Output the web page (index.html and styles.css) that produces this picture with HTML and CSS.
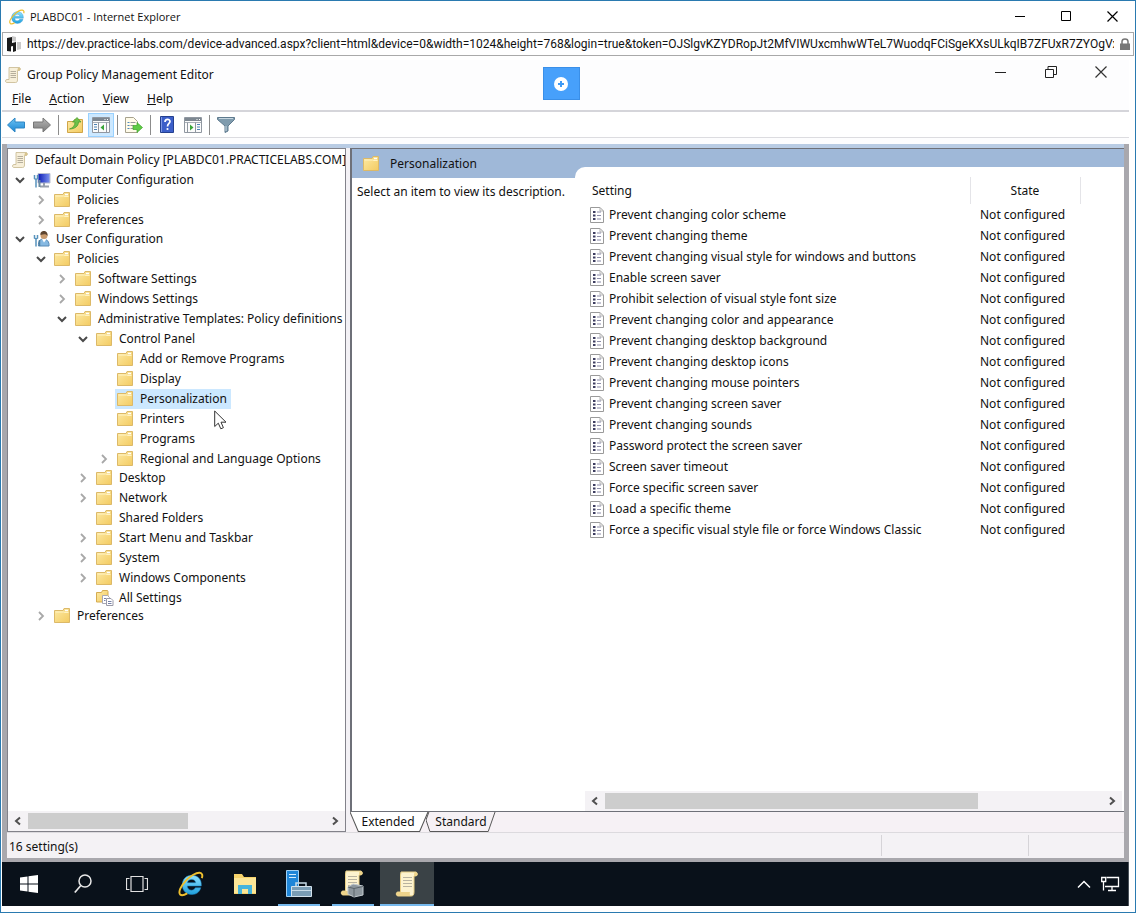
FILE: index.html
```
<!DOCTYPE html>
<html lang="en">
<head>
  <meta charset="UTF-8">
  <meta name="viewport" content="width=device-width, initial-scale=1.0">
  <title>PLABDC01 - Internet Explorer</title>
  <link rel="stylesheet" href="styles.css">
</head>
<body>
  <!-- shared icons -->
  <svg class="sprite" aria-hidden="true">
    <defs>
      <linearGradient id="gFolder" x1="0" y1="0" x2="1" y2="1">
        <stop offset="0" stop-color="#fdeaa4"/><stop offset="1" stop-color="#f3cb62"/>
      </linearGradient>
      <linearGradient id="gBlue" x1="0" y1="0" x2="0" y2="1">
        <stop offset="0" stop-color="#6cc4f5"/><stop offset="1" stop-color="#1b84d2"/>
      </linearGradient>
      <linearGradient id="gGray" x1="0" y1="0" x2="0" y2="1">
        <stop offset="0" stop-color="#b5b5b5"/><stop offset="1" stop-color="#7b7b7b"/>
      </linearGradient>
      <linearGradient id="gScreen" x1="0" y1="0" x2="1" y2="0">
        <stop offset="0" stop-color="#0a19b4"/><stop offset="1" stop-color="#7f96f0"/>
      </linearGradient>
      <linearGradient id="gE" x1="0" y1="0" x2="0" y2="1">
        <stop offset="0" stop-color="#8fe3ff"/><stop offset="1" stop-color="#1f9fdc"/>
      </linearGradient>
    </defs>
    <symbol id="i-folder" viewBox="0 0 16 16">
      <path d="M.5 2.500h8.500l1-2h5.500v14H.5z" fill="url(#gFolder)" stroke="#dcb968"/>
      <path d="M11 2.500h3" stroke="#fff" stroke-width="1.500"/>
      <path d="M1.500 4h8l1.500 .5h3.500" stroke="#fff3c4" fill="none"/>
    </symbol>
    <symbol id="i-scroll" viewBox="0 0 16 16">
      <path d="M4 .5h10.500c1.500 1 1 3-.5 3h-1.500v9.500c0 1.500-.5 2.500-2 2.500H1.500c-1.500-.5-1.300-3 .5-3h2V3z" fill="#f7efd9" stroke="#c6b78f" stroke-width=".8"/>
      <path d="M12.500 3.500h1.500c1.500 0 2-2 .5-3-1.500-.2-2 1-2 3z" fill="#d9c48c"/>
      <path d="M5.500 4.500h5.500M5.500 6.500h5.500M5.500 8.500h5.500M5.500 10.500h5.500" stroke="#a39d8d" stroke-width=".8"/>
    </symbol>
    <symbol id="i-bigscroll" viewBox="0 0 24 26">
      <path d="M6 1h15c2 1 1.500 4-.5 4H19v16c0 3-1 4-3 4H3c-2.500-.5-2-4 0-4h2.500V4z" fill="#fdf3cf" stroke="#e8cf86"/>
      <path d="M19 5h2c2 0 2-3 0-4-2 0-2 1.500-2 4zM3 21c-2 0-2.500 3.500 0 4h13c-1.500-1-1.500-2.500-1-4z" fill="#eed48b"/>
      <path d="M8 6.500h9M8 9.500h9M8 12.500h9M8 15.500h9" stroke="#b9b3a0"/>
    </symbol>
    <symbol id="i-down" viewBox="0 0 10 10"><path d="M1 3l4 4 4-4" fill="none" stroke="#4a4a4a" stroke-width="2"/></symbol>
    <symbol id="i-right" viewBox="0 0 10 10"><path d="M3 1l4 4-4 4" fill="none" stroke="#a8a8a8" stroke-width="1.800"/></symbol>
    <symbol id="i-barleft" viewBox="0 0 10 10"><path d="M7 1.500L3 5l4 3.500" fill="none" stroke="#505050" stroke-width="2"/></symbol>
    <symbol id="i-barright" viewBox="0 0 10 10"><path d="M3 1.500L7 5 3 8.500" fill="none" stroke="#505050" stroke-width="2"/></symbol>
    <symbol id="i-ie" viewBox="0 0 24 24">
      <path d="M21 15.500h-5c-.7 1.500-1.900 2.200-3.500 2.200-2.400 0-3.800-1.500-4-3.900H21.500C22 8 18.500 4 12.800 4 7.500 4 4 7.600 4 12.800s3.400 8.900 8.700 8.900c4.200 0 7.200-2.200 8.300-6.200zM8.700 10.800c.4-1.900 1.800-3 3.900-3s3.400 1.100 3.700 3z" fill="url(#gE)" fill-rule="evenodd" stroke="#1b8acb" stroke-width=".5"/>
      <path d="M22 6.500c1-2.600.2-4.600-2-4.800-3-.3-8.500 2.700-12.500 7C2.500 14 0 19.500 2 21.700c1.300 1.300 3.800.6 6.500-1" fill="none" stroke="#eebf2e" stroke-width="1.800"/>
    </symbol>
    <symbol id="i-setting" viewBox="0 0 14 16">
      <path d="M.5.5h9.500l3.500 3.500v11.500H.5z" fill="#fff" stroke="#9a9a9a"/>
      <path d="M10 .5V4h3.500" fill="none" stroke="#b5b5b5"/>
      <path d="M3 5h2.500M3 8.500h2.500M3 12h2.500" stroke="#3d3d60" stroke-width="2"/>
      <path d="M7 5h4M7 8.500h4M7 12h4" stroke="#8c8ca8"/>
    </symbol>
    <symbol id="i-computer" viewBox="0 0 18 16">
      <path d="M5 1.500h12v9.500H5z" fill="url(#gScreen)" stroke="#b9bfd0"/>
      <path d="M11 11v3M7 14.500h9" stroke="#98a0ac" stroke-width="2"/>
      <path d="M1.500 3v3.500l1.500 1v8M4.500 3v3.500l-1.500 1" fill="none" stroke="#5793bd" stroke-width="1.500"/>
      <path d="M6.500 8v7" stroke="#6a8a9f" stroke-width="2"/>
    </symbol>
    <symbol id="i-user" viewBox="0 0 18 16">
      <path d="M5.500 15c-.5-5 1.500-7 5-7s6 3 5.500 7z" fill="#86b9e2" stroke="#5689b6"/>
      <path d="M9 8l2 3.500L13.500 8" fill="#fff"/>
      <circle cx="11" cy="4.500" r="3.500" fill="#c99b6e"/>
      <path d="M7.500 4C7 1 9 0 11 0s4 1.500 3.500 5c-1-2-3-2.500-7-1z" fill="#5d4530"/>
      <path d="M1.500 4v3l1.500 1v7.500M4.500 4v3l-1.500 1" fill="none" stroke="#5793bd" stroke-width="1.500"/>
      <path d="M6.500 9v6" stroke="#4f7f9f" stroke-width="1.500"/>
    </symbol>
    <symbol id="i-all" viewBox="0 0 18 16">
      <path d="M.5 2.500h5l1-2h5l.5 1v10.500H.5z" fill="url(#gFolder)" stroke="#d5ac51"/>
      <path d="M6.500 5.500h5l2 2v6h-7z" fill="#fff" stroke="#a9a9b4"/>
      <path d="M10.500 8.500h4.500l2 2v5h-6.500z" fill="#fff" stroke="#9a9aa8"/>
      <path d="M12 11.500h3.500M12 13.500h3.500M8 8.500h2M8 10.500h1.500" stroke="#7681a8"/>
    </symbol>
    <symbol id="i-pane" viewBox="0 0 18 16">
      <path d="M.5.5h17v15H.5z" fill="#fbfbfb" stroke="#9097a0"/>
      <path d="M1 1h16v3H1z" fill="#7d8791"/>
      <path d="M12.500 2.500h1M15 2.500h1" stroke="#fff"/>
      <path d="M1 5.500h16" stroke="#a9b0b8"/>
    </symbol>
  </svg>

  <header class="ie-title">
    <svg class="ico"><use href="#i-ie"/></svg>
    <span class="ie-name">PLABDC01 - Internet Explorer</span>
    <button class="win-btn" aria-label="Minimize"><svg width="11" height="11"><path d="M0 5.500h10" stroke="#000"/></svg></button>
    <button class="win-btn" aria-label="Maximize"><svg width="11" height="11"><path d="M.5.5h9v9h-9z" fill="none" stroke="#000"/></svg></button>
    <button class="win-btn" aria-label="Close"><svg width="11" height="11"><path d="M.5.5l10 10M10.500.5l-10 10" stroke="#000" stroke-width="1.200"/></svg></button>
  </header>

  <div class="address">
    <svg width="14" height="16" viewBox="0 0 14 16"><path d="M5 0l4 1v5h5v7l-4 1V6L5 5z" fill="#c9c9c9"/><path d="M0 2l5-1v6l4-1v9l-3 1v-6l-2 .5v5L0 15z" fill="#1a1a1a"/></svg>
    <input type="text" aria-label="Address" readonly value="https://dev.practice-labs.com/device-advanced.aspx?client=html&amp;device=0&amp;width=1024&amp;height=768&amp;login=true&amp;token=OJSlgvKZYDRopJt2MfVIWUxcmhwWTeL7WuodqFCiSgeKXsULkqIB7ZFUxR7ZYOgVxQ">
    <svg width="10" height="12" viewBox="0 0 10 12"><path d="M2 6V3.500C2 0 8 0 8 3.500V6" fill="none" stroke="#777" stroke-width="1.500"/><path d="M0 5.500h10V12H0z" fill="#777"/></svg>
  </div>

  <main class="desktop">
    <div class="gp-title">
      <svg class="ico"><use href="#i-scroll"/></svg>
      <h1>Group Policy Management Editor</h1>
      <button class="win-btn gp" aria-label="Minimize"><svg width="12" height="12"><path d="M0 6.500h11" stroke="#222"/></svg></button>
      <button class="win-btn gp" aria-label="Restore"><svg width="12" height="12"><path d="M.5 3.500h8v8h-8zM3 3.500v-3h8.500v8h-3" fill="none" stroke="#222"/></svg></button>
      <button class="win-btn gp" aria-label="Close"><svg width="12" height="12"><path d="M.5.5l11 11M11.500.5l-11 11" stroke="#333" stroke-width="1.200"/></svg></button>
    </div>
    <button class="connect" aria-label="Connection menu"><svg width="14" height="14"><circle cx="7" cy="7" r="7" fill="#fff"/><path d="M7 4v6M4 7h6" stroke="#3f9af5" stroke-width="2"/></svg></button>

    <nav class="menu">
      <button><u>F</u>ile</button>
      <button><u>A</u>ction</button>
      <button><u>V</u>iew</button>
      <button><u>H</u>elp</button>
    </nav>

    <div class="toolbar">
      <button aria-label="Back"><svg width="18" height="16"><path d="M.5 8L8 1v4h9.500v6H8v4z" fill="url(#gBlue)" stroke="#2e86c4"/></svg></button>
      <button aria-label="Forward"><svg width="18" height="16"><path d="M17.500 8L10 1v4H.5v6H10v4z" fill="url(#gGray)" stroke="#777"/></svg></button>
      <span class="sep"></span>
      <button aria-label="Up one level"><svg width="16" height="16"><path d="M.5 4.500h6l1-2h8v13H.5z" fill="url(#gFolder)" stroke="#d0a548"/><path d="M2.500 12C6 11 8 8.500 8 5H5.500L10 .5 14 5h-2.500c0 4-3.500 7-9 7z" fill="#6fc04a" stroke="#459a2a" stroke-width=".7"/></svg></button>
      <button class="on" aria-label="Show console tree"><svg width="18" height="16"><use href="#i-pane" width="18" height="16"/><path d="M2 7.500h3M2 10h3M2 12.500h3" stroke="#4b82b5"/><path d="M6.500 5.500v10M14.500 5.500v10" stroke="#9097a0"/><path d="M12 7.500v6L8.500 10.500z" fill="#3aa63a"/></svg></button>
      <span class="sep"></span>
      <button aria-label="Export list"><svg width="18" height="16"><path d="M.5.5h8l4 4v11H.5z" fill="#fffbe9" stroke="#a7a28e"/><path d="M2.500 5.500h2M2.500 8.500h2M2.500 11.500h2" stroke="#4f88bd"/><path d="M5.500 5.500h5M5.500 8.500h3M5.500 11.500h3" stroke="#999"/><path d="M8 8.500h4V5.500l5.500 5-5.500 5v-3H8z" fill="#5fcb45" stroke="#3da52b" stroke-width=".7"/></svg></button>
      <span class="sep"></span>
      <button aria-label="Help"><svg width="14" height="17"><path d="M.5.5h13v16H.5z" fill="#3c5fc9" stroke="#24408f"/><path d="M1.500 1v15" stroke="#7d98e6"/><path d="M5 6c0-3.500 5-3.500 5-.5 0 2-2.500 2-2.500 5" fill="none" stroke="#fff" stroke-width="1.700"/><circle cx="7.500" cy="13" r="1.100" fill="#fff"/></svg></button>
      <button aria-label="Show action pane"><svg width="18" height="16"><use href="#i-pane" width="18" height="16"/><path d="M13 7.500h3M13 10h3M13 12.500h3" stroke="#4b82b5"/><path d="M3.500 5.500v10M11.500 5.500v10" stroke="#9097a0"/><path d="M6 7.500v6l3.500-3z" fill="#3aa63a"/></svg></button>
      <span class="sep"></span>
      <button aria-label="Filter"><svg width="18" height="16"><path d="M.5.5h17v2L11 9v5l-3 1.500V9L.5 2.500z" fill="#7f9bad" stroke="#5e7a8e"/><path d="M2 1.500h14" stroke="#c6d6e0"/><path d="M9 9v5" stroke="#c6d6e0"/></svg></button>
    </div>

    <div class="panes">
      <section class="tree-pane">
        <div class="tree-root"><svg class="ico"><use href="#i-scroll"/></svg>Default Domain Policy [PLABDC01.PRACTICELABS.COM]</div>
        <ul class="tree">
          <li><div class="node"><svg class="arrow"><use href="#i-down"/></svg><svg class="ico wide"><use href="#i-computer"/></svg><span>Computer Configuration</span></div>
            <ul>
              <li><div class="node"><svg class="arrow"><use href="#i-right"/></svg><svg class="ico"><use href="#i-folder"/></svg><span>Policies</span></div></li>
              <li><div class="node"><svg class="arrow"><use href="#i-right"/></svg><svg class="ico"><use href="#i-folder"/></svg><span>Preferences</span></div></li>
            </ul>
          </li>
          <li><div class="node"><svg class="arrow"><use href="#i-down"/></svg><svg class="ico wide"><use href="#i-user"/></svg><span>User Configuration</span></div>
            <ul>
              <li><div class="node"><svg class="arrow"><use href="#i-down"/></svg><svg class="ico"><use href="#i-folder"/></svg><span>Policies</span></div>
                <ul>
                  <li><div class="node"><svg class="arrow"><use href="#i-right"/></svg><svg class="ico"><use href="#i-folder"/></svg><span>Software Settings</span></div></li>
                  <li><div class="node"><svg class="arrow"><use href="#i-right"/></svg><svg class="ico"><use href="#i-folder"/></svg><span>Windows Settings</span></div></li>
                  <li><div class="node"><svg class="arrow"><use href="#i-down"/></svg><svg class="ico"><use href="#i-folder"/></svg><span>Administrative Templates: Policy definitions (ADMX files)</span></div>
                    <ul>
                      <li><div class="node"><svg class="arrow"><use href="#i-down"/></svg><svg class="ico"><use href="#i-folder"/></svg><span>Control Panel</span></div>
                        <ul>
                          <li><div class="node"><svg class="arrow"></svg><svg class="ico"><use href="#i-folder"/></svg><span>Add or Remove Programs</span></div></li>
                          <li><div class="node"><svg class="arrow"></svg><svg class="ico"><use href="#i-folder"/></svg><span>Display</span></div></li>
                          <li><div class="node selected"><svg class="arrow"></svg><svg class="ico"><use href="#i-folder"/></svg><span>Personalization</span>
                            <svg class="cursor" width="13" height="20"><path d="M.7 1v15.500l3.600-3.300 2.500 5.600 2.600-1.100-2.400-5.500h5z" fill="#fff" stroke="#333"/></svg></div></li>
                          <li><div class="node"><svg class="arrow"></svg><svg class="ico"><use href="#i-folder"/></svg><span>Printers</span></div></li>
                          <li><div class="node"><svg class="arrow"></svg><svg class="ico"><use href="#i-folder"/></svg><span>Programs</span></div></li>
                          <li><div class="node"><svg class="arrow"><use href="#i-right"/></svg><svg class="ico"><use href="#i-folder"/></svg><span>Regional and Language Options</span></div></li>
                        </ul>
                      </li>
                      <li><div class="node"><svg class="arrow"><use href="#i-right"/></svg><svg class="ico"><use href="#i-folder"/></svg><span>Desktop</span></div></li>
                      <li><div class="node"><svg class="arrow"><use href="#i-right"/></svg><svg class="ico"><use href="#i-folder"/></svg><span>Network</span></div></li>
                      <li><div class="node"><svg class="arrow"></svg><svg class="ico"><use href="#i-folder"/></svg><span>Shared Folders</span></div></li>
                      <li><div class="node"><svg class="arrow"><use href="#i-right"/></svg><svg class="ico"><use href="#i-folder"/></svg><span>Start Menu and Taskbar</span></div></li>
                      <li><div class="node"><svg class="arrow"><use href="#i-right"/></svg><svg class="ico"><use href="#i-folder"/></svg><span>System</span></div></li>
                      <li><div class="node"><svg class="arrow"><use href="#i-right"/></svg><svg class="ico"><use href="#i-folder"/></svg><span>Windows Components</span></div></li>
                      <li><div class="node"><svg class="arrow"></svg><svg class="ico wide"><use href="#i-all"/></svg><span>All Settings</span></div></li>
                    </ul>
                  </li>
                </ul>
              </li>
              <li><div class="node"><svg class="arrow"><use href="#i-right"/></svg><svg class="ico"><use href="#i-folder"/></svg><span>Preferences</span></div></li>
            </ul>
          </li>
        </ul>
        <div class="scrollbar">
          <svg class="arrow"><use href="#i-barleft"/></svg>
          <div class="track"><div class="thumb tree-thumb"></div></div>
          <svg class="arrow"><use href="#i-barright"/></svg>
        </div>
      </section>

      <section class="right-side">
        <div class="detail">
          <div class="info">
            <h2><svg class="ico"><use href="#i-folder"/></svg>Personalization</h2>
            <p>Select an item to view its description.</p>
          </div>
          <div class="list">
            <table>
              <thead>
                <tr><th class="name">Setting</th><th class="state">State</th><th></th></tr>
              </thead>
              <tbody>
                <tr><td><svg class="doc"><use href="#i-setting"/></svg>Prevent changing color scheme</td><td>Not configured</td></tr>
                <tr><td><svg class="doc"><use href="#i-setting"/></svg>Prevent changing theme</td><td>Not configured</td></tr>
                <tr><td><svg class="doc"><use href="#i-setting"/></svg>Prevent changing visual style for windows and buttons</td><td>Not configured</td></tr>
                <tr><td><svg class="doc"><use href="#i-setting"/></svg>Enable screen saver</td><td>Not configured</td></tr>
                <tr><td><svg class="doc"><use href="#i-setting"/></svg>Prohibit selection of visual style font size</td><td>Not configured</td></tr>
                <tr><td><svg class="doc"><use href="#i-setting"/></svg>Prevent changing color and appearance</td><td>Not configured</td></tr>
                <tr><td><svg class="doc"><use href="#i-setting"/></svg>Prevent changing desktop background</td><td>Not configured</td></tr>
                <tr><td><svg class="doc"><use href="#i-setting"/></svg>Prevent changing desktop icons</td><td>Not configured</td></tr>
                <tr><td><svg class="doc"><use href="#i-setting"/></svg>Prevent changing mouse pointers</td><td>Not configured</td></tr>
                <tr><td><svg class="doc"><use href="#i-setting"/></svg>Prevent changing screen saver</td><td>Not configured</td></tr>
                <tr><td><svg class="doc"><use href="#i-setting"/></svg>Prevent changing sounds</td><td>Not configured</td></tr>
                <tr><td><svg class="doc"><use href="#i-setting"/></svg>Password protect the screen saver</td><td>Not configured</td></tr>
                <tr><td><svg class="doc"><use href="#i-setting"/></svg>Screen saver timeout</td><td>Not configured</td></tr>
                <tr><td><svg class="doc"><use href="#i-setting"/></svg>Force specific screen saver</td><td>Not configured</td></tr>
                <tr><td><svg class="doc"><use href="#i-setting"/></svg>Load a specific theme</td><td>Not configured</td></tr>
                <tr><td><svg class="doc"><use href="#i-setting"/></svg>Force a specific visual style file or force Windows Classic</td><td>Not configured</td></tr>
              </tbody>
            </table>
            <div class="scrollbar">
              <svg class="arrow"><use href="#i-barleft"/></svg>
              <div class="track"><div class="thumb list-thumb"></div></div>
              <svg class="arrow"><use href="#i-barright"/></svg>
            </div>
          </div>
        </div>
        <div class="tabs">
          <button class="tab active"><svg viewBox="0 0 76 20" preserveAspectRatio="none"><path d="M0 0l8 19.500h59L75 0z" fill="#fff"/><path d="M0 0l8 19.500h59L75 0" fill="none" stroke="#555"/></svg><span>Extended</span></button>
          <button class="tab"><svg viewBox="0 0 72 20" preserveAspectRatio="none"><path d="M3 0L0 8l4 11.500h60L71 0" fill="none" stroke="#555"/></svg><span>Standard</span></button>
        </div>
      </section>
    </div>

    <footer class="status"><span>16 setting(s)</span><i></i><i class="short"></i></footer>

    <nav class="taskbar">
      <button aria-label="Start"><svg width="18" height="18"><path d="M0 2.600L7.500 1.500v7H0zM8.500 1.300L18 0v8.500H8.500zM0 9.500h7.500v7L0 15.400zM8.500 9.500H18V18l-9.500-1.300z" fill="#fff"/></svg></button>
      <button aria-label="Search"><svg width="18" height="20"><circle cx="11" cy="7" r="6" fill="none" stroke="#e8e8e8" stroke-width="1.500"/><path d="M6.800 11.500L.8 18.500" stroke="#e8e8e8" stroke-width="1.700"/></svg></button>
      <button aria-label="Task view"><svg width="22" height="18"><path d="M5 1.500h12v15H5zM3.500 3.500h-3v11h3M18.500 3.500h3v11h-3" fill="none" stroke="#e0e0e0" stroke-width="1.200"/></svg></button>
      <button aria-label="Internet Explorer"><svg width="26" height="26"><use href="#i-ie"/></svg></button>
      <button aria-label="File Explorer"><svg width="24" height="22"><path d="M1 1h8l2 3h12v17H1z" fill="#f6d36b"/><path d="M1 5h22v15H1z" fill="#fce697"/><path d="M5 21v-9h14v9h-4v-5H9v5z" fill="#45b4dc"/></svg></button>
      <button class="running" aria-label="Server Manager"><svg width="26" height="28"><path d="M.5.5h12v26H.5z" fill="#1f86d8" stroke="#9fd0f4"/><path d="M3 4.500h7M3 7.500h7" stroke="#d5ecfc"/><path d="M10 16v-3h10v3" fill="none" stroke="#c8dce8" stroke-width="1.500"/><path d="M5.500 16.500h20v10h-20z" fill="#7a9db5" stroke="#d3e2ec"/><path d="M6 20.500h19" stroke="#c8dce8"/></svg></button>
      <button class="running" aria-label="Group Policy Management"><svg width="26" height="28"><use href="#i-bigscroll" width="24" height="26"/><path d="M8 17l5-3 10 2v9l-9 2-6-3z" fill="#8d979e" stroke="#c3cbd0"/><path d="M14 18v9M8 17l6 1.500 9-2" stroke="#5d666c" fill="none"/></svg></button>
      <button class="running current" aria-label="Group Policy Management Editor"><svg width="24" height="26"><use href="#i-bigscroll"/></svg></button>
      <div class="tray">
        <button aria-label="Show hidden icons"><svg width="14" height="10"><path d="M1 8.500l6-6 6 6" fill="none" stroke="#fff" stroke-width="1.500"/></svg></button>
        <button aria-label="Network"><svg width="19" height="16"><path d="M5.500 1.500h12v9H4M11 10.500v4M7 14.500h8M2.500 5.500v9" fill="none" stroke="#fff" stroke-width="1.300"/><path d="M.7 1.500h4v4h-4z" fill="#09111a" stroke="#fff" stroke-width="1.300"/></svg></button>
      </div>
    </nav>
  </main>
</body>
</html>
```

FILE: styles.css
```
* {
  box-sizing: border-box;
}

body {
  margin: 0;
  min-height: 100vh;
  display: flex;
  flex-direction: column;
  border: 1px solid #2a7ab0;
  background: #fff;
  color: #111;
  font: 12px/20px "Noto Sans", "Open Sans", sans-serif;
  overflow-x: hidden;
}

button,
input {
  font: inherit;
  color: inherit;
  border: 0;
  padding: 0;
  background: none;
}

h1,
h2,
p,
ul {
  margin: 0;
  padding: 0;
  font-size: 12px;
  font-weight: normal;
  list-style: none;
}

svg {
  flex-shrink: 0;
}

.sprite {
  position: absolute;
  width: 0;
  height: 0;
}

.ico {
  width: 16px;
  height: 16px;
}

.ico.wide {
  width: 18px;
}

.arrow {
  width: 10px;
  height: 10px;
}

/* browser window */
.ie-title {
  display: flex;
  align-items: center;
  height: 31px;
  padding-left: 8px;
}

.ie-name {
  flex: 1;
  padding-left: 5px;
  font-family: "Open Sans", sans-serif;
  font-size: 11px;
}

.win-btn {
  display: flex;
  align-items: center;
  justify-content: center;
  width: 46px;
  height: 28px;
}

.win-btn.gp {
  align-self: flex-start;
  width: 50px;
  height: 22px;
}

.address {
  display: flex;
  align-items: center;
  gap: 6px;
  height: 24px;
  margin: 0 1px;
  padding: 0 3px 0 4px;
  border: 1px solid #a9a9a9;
}

.address input {
  flex: 1;
  min-width: 0;
  outline: none;
  font-family: Roboto, sans-serif;
}

/* remote desktop */
.desktop {
  position: relative;
  flex: 1;
  display: flex;
  flex-direction: column;
  margin: 4px 6px 6px 1px;
  background: #fdfdfe;
}

.gp-title {
  display: flex;
  align-items: center;
  height: 29px;
  padding: 1px 3px 0;
}

.gp-title h1 {
  flex: 1;
  padding-left: 6px;
}

.connect {
  position: absolute;
  top: 7px;
  left: 48%;
  width: 37px;
  height: 33px;
  display: flex;
  align-items: center;
  justify-content: center;
  background: #47a0fb;
  border: 1px solid #3a8fe8;
}

.menu {
  display: flex;
  gap: 18px;
  height: 23px;
  padding-left: 10px;
  border-bottom: 2px solid #d5d5da;
}

.menu button {
  height: 20px;
}

.toolbar {
  display: flex;
  align-items: center;
  height: 26px;
  padding-left: 1px;
  background: #fff;
  border-bottom: 1px solid #dcdce0;
}

.toolbar button {
  display: flex;
  align-items: center;
  justify-content: center;
  width: 26px;
  height: 24px;
}

.toolbar .on {
  background: #cce8ff;
  border: 1px solid #99d1ff;
}

.sep {
  width: 1px;
  height: 20px;
  margin: 0 3px;
  background: #8c8c8c;
}

.panes {
  flex: 1;
  display: flex;
  gap: 4px;
  padding-top: 4px;
  margin-top: 6px;
  border: solid #a9a8ad;
  border-width: 0 5px;
  background: linear-gradient(#b9cce4 4px, #f3f1f5 4px);
}

.tree-pane {
  display: flex;
  flex-direction: column;
  width: 339px;
  overflow: hidden;
  background: #fff;
  border: 1px solid #82828a;
}

.tree-root {
  display: flex;
  align-items: center;
  gap: 7px;
  height: 21px;
  padding-left: 4px;
  white-space: nowrap;
}

.tree {
  flex: 1;
  padding-left: 7px;
}

.tree ul {
  display: flex;
  flex-direction: column;
  padding-left: 21px;
  margin-bottom: -1px;
}

.node {
  position: relative;
  display: flex;
  align-items: center;
  height: 20px;
  white-space: nowrap;
}

.node .ico {
  margin-left: 8px;
}

.node span {
  padding: 0 4px 0 7px;
}

.node .wide + span {
  padding-left: 5px;
}

.selected {
  width: fit-content;
  background: linear-gradient(90deg, #fff 16px, #cce8ff 16px);
}

.cursor {
  position: absolute;
  top: 21px;
  right: 4px;
  z-index: 1;
}

.scrollbar {
  display: flex;
  align-items: center;
  gap: 5px;
  height: 20px;
  padding: 0 5px;
  background: #f4f2f5;
}

.track {
  flex: 1;
  height: 16px;
}

.thumb {
  height: 100%;
  background: #cdcdcd;
}

.tree-thumb {
  width: 54%;
}

.list-thumb {
  width: 75%;
}

.right-side {
  flex: 1;
  min-width: 0;
  display: flex;
  flex-direction: column;
}

.detail {
  flex: 1;
  display: flex;
  border: solid #6e7078;
  border-width: 1px 0 1px 2px;
  background: linear-gradient(#9fb8d8 29px, #fff 29px);
}

.info {
  width: 223px;
  white-space: nowrap;
}

.info h2 {
  display: flex;
  align-items: center;
  gap: 11px;
  height: 29px;
  padding-left: 11px;
}

.info p {
  padding: 4px 0 0 5px;
}

.list {
  flex: 1;
  display: flex;
  flex-direction: column;
  justify-content: space-between;
  margin-top: 18px;
  padding: 10px 2px 0 10px;
  background: #fff;
  border-top-left-radius: 10px;
}

table {
  width: 100%;
  table-layout: fixed;
  border-collapse: collapse;
}

th,
td {
  height: 21px;
  padding: 0 0 0 5px;
  font-weight: normal;
  text-align: left;
  white-space: nowrap;
}

th {
  height: 27px;
  padding-left: 7px;
}

.name {
  width: 385px;
}

.state {
  width: 110px;
  padding: 0;
  text-align: center;
  border: solid #e4e4e8;
  border-width: 0 1px;
}

td + td {
  padding-left: 10px;
}

.doc {
  width: 14px;
  height: 16px;
  margin-right: 5px;
  vertical-align: middle;
}

.tabs {
  display: flex;
  height: 20px;
  background: #f6f1f5;
}

.tab {
  position: relative;
  width: 76px;
}

.tab svg {
  position: absolute;
  top: 0;
  left: 0;
  width: 79px;
  height: 20px;
}

.tab:not(.active) {
  width: 70px;
}

.tab:not(.active) svg {
  width: 70px;
}

.tab span {
  position: relative;
}

.status {
  display: flex;
  height: 30px;
  border: solid #a9a8ad;
  border-width: 0 5px 4px;
  background: #f4f2f5;
  box-shadow: inset 0 1px #dcdade;
}

.status span {
  flex: 1;
  padding: 5px 0 0 2px;
}

.status i {
  width: 147px;
  margin: 3px 0 2px;
  border-left: 1px solid #d6d4d8;
}

.status .short {
  width: 96px;
}

.taskbar {
  display: flex;
  height: 44px;
  background: #09111a;
}

.taskbar button {
  display: flex;
  align-items: center;
  justify-content: center;
  width: 54px;
}

.taskbar .running {
  background: linear-gradient(#76b9ed, #76b9ed) center bottom / 42px 2px no-repeat;
}

.taskbar .current {
  background-color: #3a4246;
  background-size: 54px 2px;
}

.taskbar .tray {
  display: flex;
  margin-left: auto;
  padding-right: 4px;
  border-right: 1px solid #4a525a;
}

.tray button {
  width: 27px;
}
```
